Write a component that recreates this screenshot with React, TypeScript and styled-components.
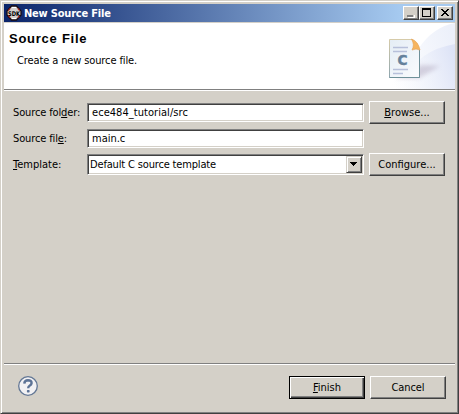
import React from 'react';
import styled, { createGlobalStyle } from 'styled-components';

const Global = createGlobalStyle`
  * { box-sizing: border-box; }
  html, body { margin: 0; padding: 0; background: #d4d0c8; overflow: hidden; }
`;

const Dialog = styled.div`
  width: 459px;
  height: 414px;
  display: flex;
  flex-direction: column;
  padding: 3px;
  background: #d4d0c8;
  border: 1px solid;
  border-color: #d4d0c8 #404040 #404040 #d4d0c8;
  box-shadow: inset 1px 1px #fff, inset -1px -1px #808080;
  font: 11px/13px 'DejaVu Sans Condensed', 'DejaVu Sans', sans-serif;
  font-stretch: condensed;
  color: #000;
`;

const TitleBar = styled.div`
  flex: none;
  width: 451px;
  height: 18px;
  display: flex;
  align-items: center;
  padding: 0 2px 0 2px;
  background: linear-gradient(90deg, #0a246a, #a6caf0 88%);
`;

const Label = styled.span<{ $gap?: number }>`
  white-space: pre;
  letter-spacing: ${p => p.$gap ?? 0}px;
  u { text-decoration: underline; text-decoration-thickness: 1px; text-underline-offset: 1px; text-decoration-skip-ink: none; }
`;

const Caption = styled(Label)`
  flex: 1;
  margin-left: 2px;
  color: #fff;
  font-weight: bold;
`;

const Control = styled.span<{ $apart?: boolean }>`
  width: 16px;
  height: 14px;
  margin-left: ${p => (p.$apart ? 2 : 0)}px;
  background: #d4d0c8;
  border: 1px solid;
  border-color: #fff #404040 #404040 #fff;
  box-shadow: inset -1px -1px #808080;
  svg { display: block; }
`;

const Banner = styled.header`
  flex: none;
  width: 451px;
  height: 68px;
  margin-top: 1px;
  display: flex;
  justify-content: space-between;
  background: #fff;
  border-bottom: 1px solid #fff;
  box-shadow: inset 0 -1px #808080;
`;

const Heading = styled.div`
  display: flex;
  flex-direction: column;
  padding: 8px 0 0 5px;
`;

const Title = styled.h1`
  margin: 0;
  font: bold 13px/16px 'Liberation Sans', Arial, sans-serif;
  letter-spacing: 0.75px;
  white-space: pre;
`;

const Description = styled(Label)`
  margin: 7px 0 0 8px;
`;

const Form = styled.div`
  flex: 1;
  display: grid;
  grid-template-columns: 74px 277px 81px;
  grid-template-rows: 23px 19px 23px;
  row-gap: 5px;
  align-content: start;
  align-items: center;
  padding: 10px 0 0 9px;
`;

const Field = styled.div<{ $combo?: boolean }>`
  display: flex;
  align-items: center;
  justify-content: space-between;
  height: ${p => (p.$combo ? 21 : 19)}px;
  padding: 1px 1px 1px ${p => (p.$combo ? 2 : 4)}px;
  background: #fff;
  border: 1px solid;
  border-color: #808080 #fff #fff #808080;
  box-shadow: inset 1px 1px #404040, inset -1px -1px #d4d0c8;
`;

const Drop = styled.span`
  width: 16px;
  height: 17px;
  background: #d4d0c8;
  border: 1px solid;
  border-color: #d4d0c8 #404040 #404040 #d4d0c8;
  box-shadow: inset 1px 1px #fff, inset -1px -1px #808080;
  svg { display: block; }
`;

const Button = styled.button<{ $default?: boolean; $inset?: boolean }>`
  width: 76px;
  height: 23px;
  padding: 0;
  margin-left: ${p => (p.$inset ? 5 : 0)}px;
  font: inherit;
  color: #000;
  background: #d4d0c8;
  border: 1px solid;
  border-color: ${p => (p.$default ? '#000' : '#fff #404040 #404040 #fff')};
  box-shadow: ${p =>
    p.$default
      ? 'inset 1px 1px #fff, inset -1px -1px #404040, inset -2px -2px #808080'
      : 'inset -1px -1px #808080'};
`;

const Footer = styled.footer`
  flex: none;
  width: 451px;
  height: 47px;
  display: flex;
  align-items: flex-start;
  padding: 12px 9px 0 14px;
  border-top: 1px solid #808080;
  box-shadow: inset 0 1px #fff;
`;

const Actions = styled.div`
  display: flex;
  gap: 5px;
  margin-left: auto;
`;

const SdkIcon = () => (
  <svg width="16" height="16" viewBox="0 0 16 16">
    <path d="M5.5 1h5L15 6v4l-4.500 5h-5L1 10V6z" fill="#d3d0ce" stroke="#1a0d12" strokeWidth="1.3" />
    <path d="M4.300 3.400 2.300 5.600M11.700 3.400 13.700 5.600M4.300 12.600 2.300 10.400M11.700 12.600 13.700 10.400" stroke="#b52f28" strokeWidth="1.200" />
    <path d="M6 2.500h4M6 13.500h4" stroke="#fff" />
    <text x="8" y="10.500" textAnchor="middle" textLength="12" lengthAdjust="spacingAndGlyphs"
      fontFamily="DejaVu Sans" fontWeight="bold" fontSize="6.500" fill="#000">SDK</text>
  </svg>
);

const BannerArt = () => (
  <svg width="80" height="66" viewBox="0 0 80 66">
    <defs>
      <linearGradient id="sweep" x1="0" y1=".6" x2="1" y2=".3">
        <stop stopColor="#fff" /><stop offset="1" stopColor="#ecf0fa" />
      </linearGradient>
      <linearGradient id="sweepLow" x1="0" y1=".5" x2="1" y2=".3">
        <stop stopColor="#fff" stopOpacity="0" /><stop offset="1" stopColor="#dde3f6" />
      </linearGradient>
      <linearGradient id="paper" x1="0" y1="0" x2="1" y2="1">
        <stop stopColor="#e4edf5" /><stop offset="1" stopColor="#fafbfd" />
      </linearGradient>
      <linearGradient id="edge" x1="0" y1="0" x2="0" y2="1">
        <stop stopColor="#d6cba9" /><stop offset="1" stopColor="#8ea5ae" />
      </linearGradient>
      <filter id="soft" x="-30%" y="-50%" width="160%" height="200%"><feGaussianBlur stdDeviation="2" /></filter>
    </defs>
    <path d="M80 0Q58 4 44 25Q32 47 12 66H80z" fill="url(#sweep)" />
    <path d="M80 21Q62 24 49 33Q28 51 5 66H80z" fill="url(#sweepLow)" />
    <path d="M20 55 46 42 65 43 44 55z" fill="#8c7c9b" opacity=".3" filter="url(#soft)" />
    <path d="M14.500 16.500H37L44.500 27V54.500H14.500z" fill="url(#paper)" stroke="url(#edge)" />
    <path d="M44.500 27V54.500H14.500" fill="none" stroke="#6e9099" />
    <path d="M36.500 16Q40 22 37 27Q41 25 45 27Q43 18 36.500 16z" fill="#f6b45e" stroke="#e6a354" strokeWidth=".7" />
    <path d="M18 24.500H33M18 28.500H32M18 46.500H33M18 50.500H28" stroke="#b7c0da" strokeWidth="1.600" />
    <text x="22.500" y="42" fontFamily="DejaVu Sans" fontWeight="bold" fontSize="14" textLength="10" lengthAdjust="spacingAndGlyphs" fill="#65819b" stroke="#65819b" strokeWidth=".4">C</text>
  </svg>
);

const HelpIcon = () => (
  <svg width="20" height="20" viewBox="0 0 20 20">
    <circle cx="10" cy="10" r="9.300" fill="#f2f1f3" stroke="#637795" strokeWidth="1.300" />
    <path d="M6.300 7.600Q6.500 4.200 10 4.200Q13.700 4.300 13.600 7.200Q13.500 8.700 11.600 9.700Q10.200 10.500 10.200 12.300" fill="none" stroke="#5d7396" strokeWidth="2.400" />
    <rect x="8.900" y="14" width="2.700" height="2.500" rx=".7" fill="#5d7396" />
  </svg>
);

export default function App() {
  return (
    <Dialog>
      <Global />
      <TitleBar>
        <SdkIcon />
        <Caption $gap={-0.2}>New Source File</Caption>
        <Control><svg width="14" height="12" shapeRendering="crispEdges"><path d="M4 10h6V8h1v3H4z" fill="#fff" /><path d="M3 8h6v2H3z" fill="#808080" /></svg></Control>
        <Control><svg width="14" height="12" shapeRendering="crispEdges"><path d="M2 1h9v9H2zM3 3v6h7V3z" fillRule="evenodd" /></svg></Control>
        <Control $apart><svg width="14" height="12" shapeRendering="crispEdges"><path d="M3 2h2v1h1v1h2V3h1V2h2v1h-1v1H9v1H8v1h1v1h1v1h1v1H9V8H8V7H6v1H5v1H3V8h1V7h1V6h1V5H5V4H4V3H3z" /></svg></Control>
      </TitleBar>
      <Banner>
        <Heading>
          <Title>Source File</Title>
          <Description $gap={-0.12}>Create a new source file.</Description>
        </Heading>
        <BannerArt />
      </Banner>
      <Form>
        <Label $gap={-0.13}>Source fol<u>d</u>er:</Label>
        <Field><Label $gap={0.05}>ece484_tutorial/src</Label></Field>
        <Button $inset><Label><u>B</u>rowse...</Label></Button>
        <Label $gap={-0.13}>Source fil<u>e</u>:</Label>
        <Field><Label>main.c</Label></Field>
        <span />
        <Label><u>T</u>emplate:</Label>
        <Field $combo>
          <Label $gap={-0.16}>Default C source template</Label>
          <Drop><svg width="14" height="15" shapeRendering="crispEdges"><path d="M3 5h7v1H9v1H8v1H7v1H6V8H5V7H4V6H3z" /></svg></Drop>
        </Field>
        <Button $inset><Label>Configure...</Label></Button>
      </Form>
      <Footer>
        <HelpIcon />
        <Actions>
          <Button $default><Label><u>F</u>inish</Label></Button>
          <Button><Label $gap={-0.1}>Cancel</Label></Button>
        </Actions>
      </Footer>
    </Dialog>
  );
}
